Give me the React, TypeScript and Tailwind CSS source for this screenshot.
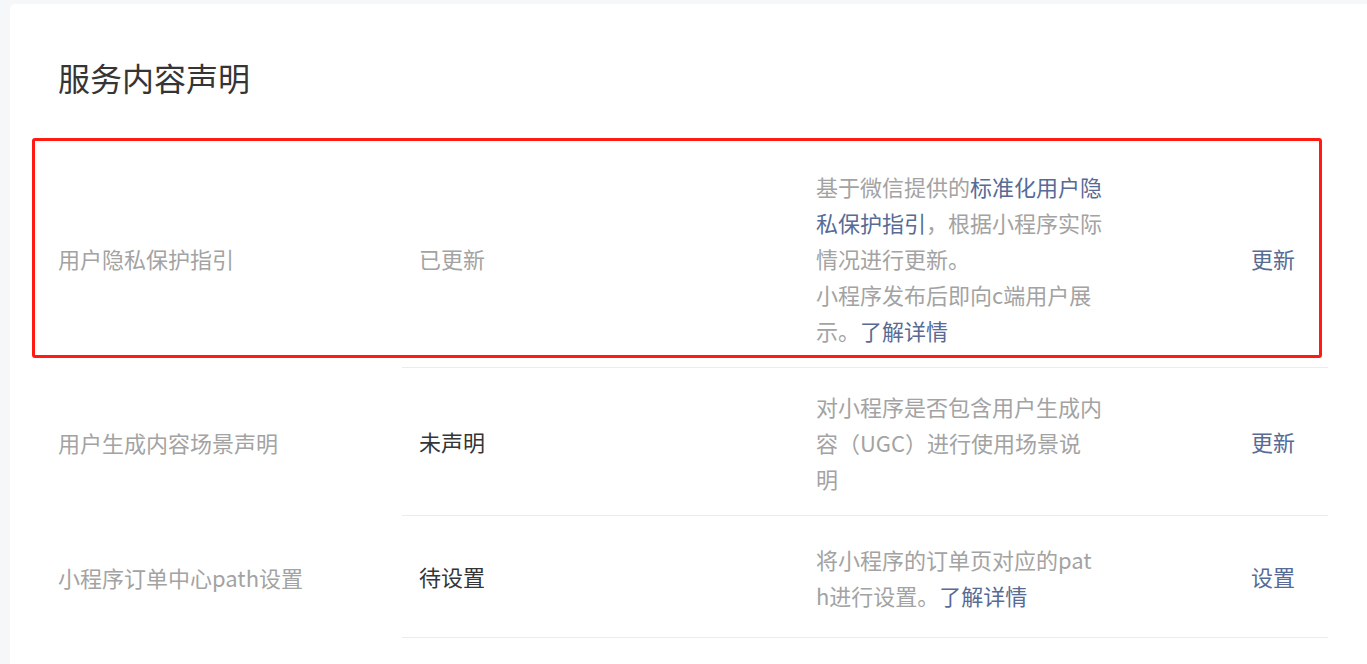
import React from "react";

const font = { fontFamily: '"Noto Sans CJK SC", "Noto Sans", sans-serif' };

function Link({ children }: { children: React.ReactNode }) {
  return <span className="text-[#576b95]">{children}</span>;
}

type Row = {
  label: string;
  status: string;
  statusDark: boolean;
  desc: React.ReactNode[];
  action: string;
  h: string;
};

const rows: Row[] = [
  {
    label: "用户隐私保护指引",
    status: "已更新",
    statusDark: false,
    desc: [
      <>基于微信提供的<Link>标准化用户隐</Link></>,
      <><Link>私保护指引</Link>，根据小程序实际</>,
      <>情况进行更新。</>,
      <>小程序发布后即向c端用户展</>,
      <>示。<Link>了解详情</Link></>,
    ],
    action: "更新",
    h: "h-[218px]",
  },
  {
    label: "用户生成内容场景声明",
    status: "未声明",
    statusDark: true,
    desc: [
      <>对小程序是否包含用户生成内</>,
      <>容（UGC）进行使用场景说</>,
      <>明</>,
    ],
    action: "更新",
    h: "h-[147px]",
  },
  {
    label: "小程序订单中心path设置",
    status: "待设置",
    statusDark: true,
    desc: [
      <>将小程序的订单页对应的pat</>,
      <>h进行设置。<Link>了解详情</Link></>,
    ],
    action: "设置",
    h: "h-[121px]",
  },
];

export default function App() {
  return (
    <div className="h-[664px] w-[1367px] overflow-hidden bg-[#f6f7f9] pt-[4px] pl-[10px]" style={font}>
      <div className="relative h-[700px] w-[1357px] rounded-tl-[5px] bg-white pl-[48px] pr-[39px] pt-[53px]">
        <h1 className="text-[32px] leading-[40px] font-normal text-[#353535]">服务内容声明</h1>
        <div className="mt-[52px] flex flex-col">
          {rows.map((r, i) => (
            <div key={i} className="flex">
              <div className="flex w-[344px] shrink-0 items-center text-[22px] text-[#a3a3a3]">
                {r.label}
              </div>
              <div className={`flex flex-1 items-center border-b border-[#ececef] pl-[17px] ${r.h} box-content`}>
                <div className={`w-[397px] shrink-0 text-[22px] ${r.statusDark ? "text-[#353535]" : "text-[#a3a3a3]"}`}>
                  {r.status}
                </div>
                <div className="w-[435px] shrink-0 text-[22px] leading-[36px] text-[#a3a3a3]">
                  {r.desc.map((d, j) => (
                    <div key={j} className="whitespace-nowrap">{d}</div>
                  ))}
                </div>
                <div className="text-[22px] text-[#576b95]">{r.action}</div>
              </div>
            </div>
          ))}
        </div>
        <div className="pointer-events-none absolute left-[22px] top-[134px] h-[220px] w-[1290px] rounded-[3px] border-[3px] border-[#ff1a14]" />
      </div>
    </div>
  );
}
